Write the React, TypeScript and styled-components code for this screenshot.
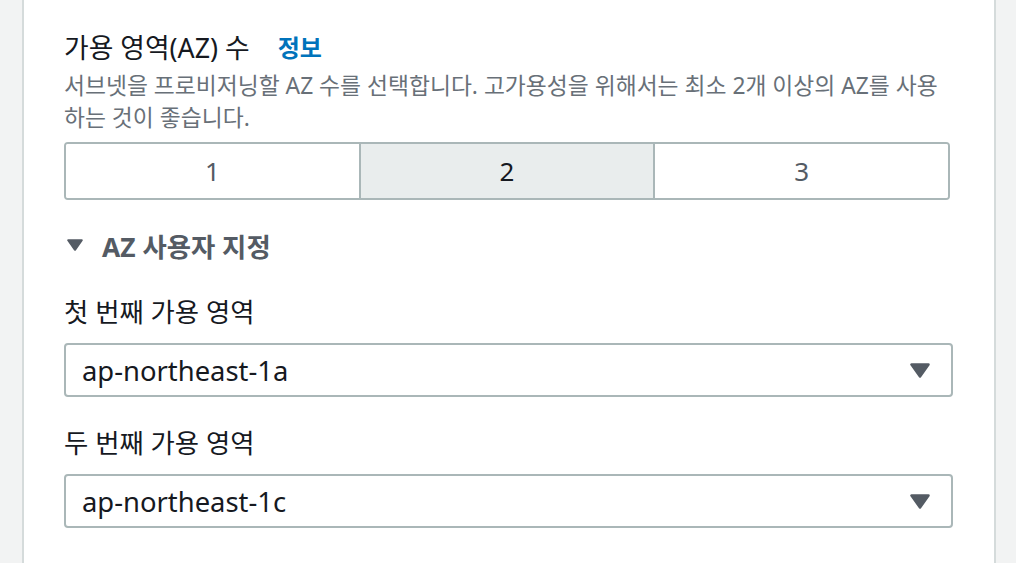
import React, { useState } from 'react';
import styled, { createGlobalStyle } from 'styled-components';

const Global = createGlobalStyle`
  html, body { margin: 0; padding: 0; background: #f2f3f3; }
  body {
    font-family: "Noto Sans", "Noto Sans CJK KR", sans-serif;
    -webkit-font-smoothing: antialiased;
  }
  * { box-sizing: border-box; }
`;

const Page = styled.div`
  display: flex;
  height: 563px;
  padding: 0 20px 0 22px;
  overflow: hidden;
`;

const Panel = styled.section`
  flex: 1;
  background: #ffffff;
  border-left: 2px solid #d5dbdb;
  border-right: 2px solid #d5dbdb;
  padding: 30px 41px 0 40px;
  display: flex;
  flex-direction: column;
`;

const TitleRow = styled.div`
  display: flex;
  align-items: center;
  gap: 28px;
  height: 36px;
`;

const Title = styled.span`
  font-size: 26.8px;
  color: #16191f;
  line-height: 36px;
`;

const InfoLink = styled.a`
  font-size: 24px;
  font-weight: 700;
  color: #0073bb;
  text-decoration: none;
  line-height: 36px;
`;

const Description = styled.p`
  margin: 4px 12px 0 0;
  font-size: 22.8px;
  line-height: 32px;
  color: #687078;
`;

const Segmented = styled.div`
  margin: 8px 3px 0 0;
  display: flex;
  height: 58px;
  border: 2px solid #aab7b8;
  border-radius: 4px;
  overflow: hidden;
`;

const Segment = styled.button<{ $active: boolean }>`
  flex: 1;
  border: none;
  border-left: 2px solid #aab7b8;
  &:first-child { border-left: none; }
  background: ${(p) => (p.$active ? '#e9eded' : '#ffffff')};
  color: ${(p) => (p.$active ? '#16191f' : '#545b64')};
  font-family: inherit;
  font-size: 26px;
  cursor: pointer;
  padding: 0;
`;

const Disclosure = styled.div`
  margin-top: 27px;
  display: flex;
  align-items: center;
  gap: 19px;
  height: 36px;
  padding-left: 3px;
  color: #545b64;
  font-size: 26.4px;
  font-weight: 700;
`;

const Field = styled.div<{ $top: number }>`
  margin-top: ${(p) => p.$top}px;
  display: flex;
  flex-direction: column;
  gap: 13px;
`;

const Label = styled.label`
  font-size: 26.4px;
  line-height: 36px;
  color: #16191f;
`;

const Select = styled.div`
  height: 54px;
  border: 2px solid #aab7b8;
  border-radius: 4px;
  display: flex;
  align-items: center;
  justify-content: space-between;
  padding: 0 21px 0 16px;
  font-size: 27.4px;
  color: #16191f;
`;

const Caret = ({ w, h }: { w: number; h: number }) => (
  <svg width={w} height={h} viewBox="0 0 20 15" preserveAspectRatio="none" aria-hidden>
    <path d="M1.5 1.5 H18.5 L10 13.5 Z" fill="#545b64" stroke="#545b64" strokeWidth="2.5" strokeLinejoin="round" />
  </svg>
);

export default function App() {
  const [count, setCount] = useState(2);
  return (
    <>
      <Global />
      <Page>
        <Panel>
          <TitleRow>
            <Title>가용 영역(AZ) 수</Title>
            <InfoLink href="#">정보</InfoLink>
          </TitleRow>
          <Description>
            서브넷을 프로비저닝할 AZ 수를 선택합니다. 고가용성을 위해서는 최소 2개 이상의 AZ를 사용하는 것이 좋습니다.
          </Description>
          <Segmented>
            {[1, 2, 3].map((n) => (
              <Segment key={n} $active={count === n} onClick={() => setCount(n)}>
                {n}
              </Segment>
            ))}
          </Segmented>
          <Disclosure>
            <Caret w={16} h={12} />
            <span>AZ 사용자 지정</span>
          </Disclosure>
          <Field $top={31}>
            <Label>첫 번째 가용 영역</Label>
            <Select>
              <span>ap-northeast-1a</span>
              <Caret w={20} h={15} />
            </Select>
          </Field>
          <Field $top={28}>
            <Label>두 번째 가용 영역</Label>
            <Select>
              <span>ap-northeast-1c</span>
              <Caret w={20} h={15} />
            </Select>
          </Field>
        </Panel>
      </Page>
    </>
  );
}
